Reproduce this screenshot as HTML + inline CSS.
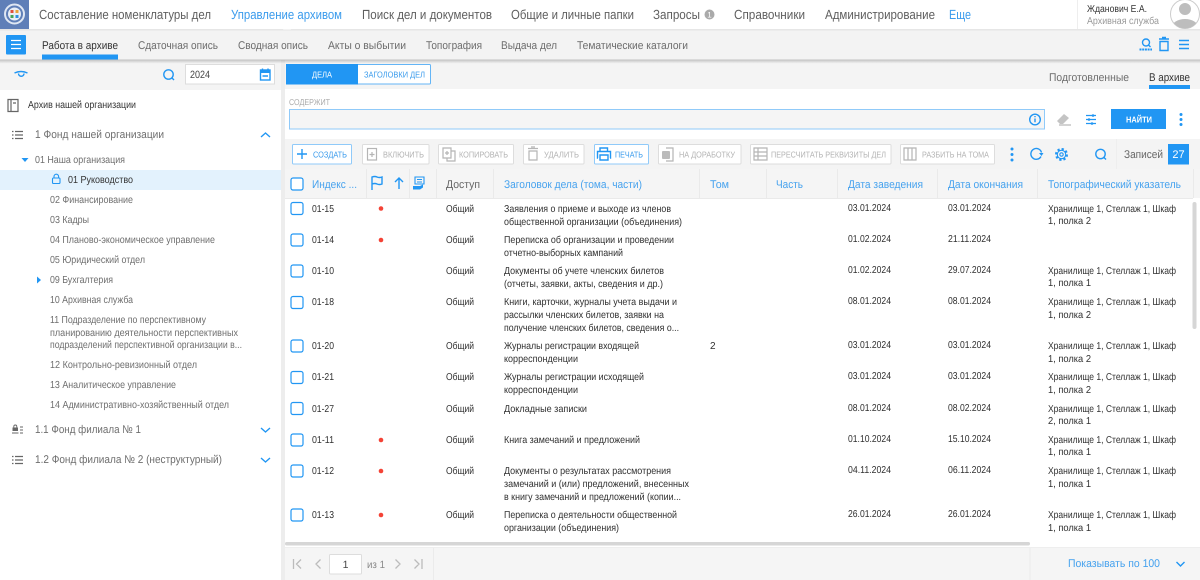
<!DOCTYPE html>
<html lang="ru"><head><meta charset="utf-8"><title>Управление архивом</title>
<style>
html,body{margin:0;padding:0;width:1200px;height:580px;overflow:hidden;background:#fff}
svg{display:block}
text{font-family:"Liberation Sans",sans-serif;white-space:pre}
.nav{font-size:13.2px;fill:#5f5f5f}
.tab{font-size:11.2px;fill:#6c6c6c}
.tree{font-size:10.2px;fill:#6e6e6e}
.fund{font-size:11.2px;fill:#6e6e6e}
.btn{font-size:8.6px;fill:#b3b3b3}
.btna{font-size:8.6px;fill:#3a9bec}
.th{font-size:11.2px;fill:#46a2ee}
.td{font-size:10px;fill:#2f2f2f}
.i{fill:none;stroke:#2196f3;stroke-width:1.4}
.g{fill:none;stroke:#b5b5b5;stroke-width:1.2}
.k{fill:none;stroke:#666;stroke-width:1.2}
</style></head><body>
<svg width="1200" height="580" viewBox="0 0 1200 580" xmlns="http://www.w3.org/2000/svg" text-rendering="geometricPrecision">
<defs>
<linearGradient id="sh" x1="0" y1="0" x2="0" y2="1"><stop offset="0" stop-color="#000" stop-opacity=".22"/><stop offset="1" stop-color="#000" stop-opacity="0"/></linearGradient>
<clipPath id="av"><circle cx="1185" cy="14" r="14.500"/></clipPath>
</defs>
<rect width="1200" height="580" fill="#fff"/>

<!-- top nav -->
<rect x="0" y="0" width="29" height="29" fill="#5f7fb8"/>
<circle cx="14.5" cy="14" r="9.500" fill="none" stroke="#dfe7f3" stroke-width="2"/>
<circle cx="14.5" cy="14" r="6.500" fill="#e8eef6"/>
<rect x="10.500" y="10" width="3" height="3" fill="#e0503c"/><rect x="15.500" y="10" width="3" height="3" fill="#e9a13a"/><rect x="10.500" y="15" width="3" height="3" fill="#46a35a"/><rect x="15.500" y="15" width="3" height="3" fill="#2f8fe0"/>
<text class="nav" x="39" y="19" textLength="172" lengthAdjust="spacingAndGlyphs">Составление номенклатуры дел</text>
<text class="nav" x="231" y="19" textLength="111" lengthAdjust="spacingAndGlyphs" style="fill:#3a9bec">Управление архивом</text>
<text class="nav" x="362" y="19" textLength="130" lengthAdjust="spacingAndGlyphs">Поиск дел и документов</text>
<text class="nav" x="511" y="19" textLength="123" lengthAdjust="spacingAndGlyphs">Общие и личные папки</text>
<text class="nav" x="653" y="19" textLength="47" lengthAdjust="spacingAndGlyphs">Запросы</text>
<circle cx="709.500" cy="14.500" r="5" fill="#aaa"/><text x="709.500" y="17.500" text-anchor="middle" style="font-size:8px;fill:#fff">1</text>
<text class="nav" x="734" y="19" textLength="71" lengthAdjust="spacingAndGlyphs">Справочники</text>
<text class="nav" x="825" y="19" textLength="110" lengthAdjust="spacingAndGlyphs">Администрирование</text>
<text class="nav" x="949" y="19" textLength="22" lengthAdjust="spacingAndGlyphs" style="fill:#3a9bec">Еще</text>
<rect x="1077" y="0" width="1" height="29" fill="#eee"/>
<text x="1087" y="12" textLength="60" lengthAdjust="spacingAndGlyphs" style="font-size:10px;fill:#333">Жданович Е.А.</text>
<text x="1087" y="24" textLength="72" lengthAdjust="spacingAndGlyphs" style="font-size:10px;fill:#999">Архивная служба</text>
<circle cx="1185" cy="14" r="14.500" fill="#fff" stroke="#ccc"/><g clip-path="url(#av)"><circle cx="1185" cy="9" r="6" fill="#bdbdbd"/><ellipse cx="1185" cy="27" rx="13" ry="8" fill="#bdbdbd"/></g>

<!-- subnav -->
<rect x="0" y="29" width="1200" height="31" fill="#f3f3f3"/>
<rect x="0" y="29" width="1200" height="1.500" fill="#e6e6e6"/>
<path d="M283 29.500l4-4 4 4z" fill="#fff"/>
<rect x="6" y="35" width="20" height="19.500" rx="1" fill="#2196f3"/>
<path d="M11 40.500h10M11 44.500h10M11 48.500h10" stroke="#fff" stroke-width="1.300"/>
<text class="tab" x="42" y="49" textLength="76" lengthAdjust="spacingAndGlyphs" style="fill:#333">Работа в архиве</text>
<rect x="42" y="54.500" width="76" height="5" fill="#2196f3"/>
<text class="tab" x="138" y="49" textLength="80" lengthAdjust="spacingAndGlyphs">Сдаточная опись</text>
<text class="tab" x="238" y="49" textLength="70" lengthAdjust="spacingAndGlyphs">Сводная опись</text>
<text class="tab" x="328" y="49" textLength="78" lengthAdjust="spacingAndGlyphs">Акты о выбытии</text>
<text class="tab" x="426" y="49" textLength="56" lengthAdjust="spacingAndGlyphs">Топография</text>
<text class="tab" x="501" y="49" textLength="56" lengthAdjust="spacingAndGlyphs">Выдача дел</text>
<text class="tab" x="577" y="49" textLength="111" lengthAdjust="spacingAndGlyphs">Тематические каталоги</text>
<circle cx="1146" cy="42.500" r="3.500" class="i"/><path d="M1148.500 45l2 2" class="i"/><path d="M1139.500 49.500h12.500" stroke="#2196f3" stroke-width="2" stroke-dasharray="2 .7"/>
<path d="M1160 41.500h8v9h-8zM1159 39h10M1162 37.500h4" class="i"/>
<path d="M1179 40.500h10M1179 44.500h10M1179 48.500h10" class="i"/>

<!-- band under subnav -->
<rect x="0" y="60" width="1200" height="30" fill="#f4f4f4"/>
<rect x="281" y="60" width="4" height="520" fill="#ededed"/>
<!-- left -->
<path d="M14.500 73q6.500-3 13 0" class="i"/><path d="M18.500 73.500a2.700 2.700 0 0 0 5.500 0" fill="none" stroke="#2196f3" stroke-width="1.400"/>
<circle cx="168.500" cy="74.500" r="4.700" class="i"/><path d="M172 78l2 2" class="i"/>
<rect x="185.500" y="64.500" width="89" height="19.500" fill="#fff" stroke="#ddd"/>
<text x="190" y="78" textLength="20" lengthAdjust="spacingAndGlyphs" style="font-size:10.500px;fill:#444">2024</text>
<rect x="260.500" y="70" width="9.500" height="10" class="i"/><rect x="260" y="70" width="10.500" height="3" fill="#2196f3"/><path d="M262.500 68.500v2M268 68.500v2M262.500 76h5.500" class="i"/>

<path d="M8 99.500h10v12h-10zM11 99.500v12M13 103h3" class="k"/>
<text x="28" y="108" textLength="108" lengthAdjust="spacingAndGlyphs" style="font-size:10.200px;fill:#333">Архив нашей организации</text>
<path d="M12 131.500h1.500M12 135h1.500M12 138.500h1.500M15 131.500h8M15 135h8M15 138.500h8" class="k"/>
<text class="fund" x="35" y="138" textLength="129" lengthAdjust="spacingAndGlyphs">1 Фонд нашей организации</text>
<path d="M261 137l4.500-4 4.500 4" class="i"/>
<path d="M21.500 158h7l-3.500 4z" fill="#2196f3"/>
<text class="tree" x="35" y="163" textLength="90" lengthAdjust="spacingAndGlyphs">01 Наша организация</text>
<rect x="0" y="170" width="281" height="20" fill="#e3f2fd"/>
<rect x="52.500" y="178" width="7.500" height="5.500" rx="1" class="i" style="stroke-width:1.100"/><path d="M54 178v-1.500a2.300 2.300 0 0 1 4.600 0v1.500" class="i" style="stroke-width:1.100"/>
<text class="tree" x="68" y="183" textLength="65" lengthAdjust="spacingAndGlyphs" style="fill:#333">01 Руководство</text>
<text class="tree" x="50" y="203" textLength="83" lengthAdjust="spacingAndGlyphs">02 Финансирование</text>
<text class="tree" x="50" y="223" textLength="39" lengthAdjust="spacingAndGlyphs">03 Кадры</text>
<text class="tree" x="50" y="243" textLength="165" lengthAdjust="spacingAndGlyphs">04 Планово-экономическое управление</text>
<text class="tree" x="50" y="263" textLength="95" lengthAdjust="spacingAndGlyphs">05 Юридический отдел</text>
<path d="M37 276.500l4 3.500-4 3.500z" fill="#2196f3"/>
<text class="tree" x="50" y="283" textLength="63" lengthAdjust="spacingAndGlyphs">09 Бухгалтерия</text>
<text class="tree" x="50" y="303" textLength="83" lengthAdjust="spacingAndGlyphs">10 Архивная служба</text>
<text class="tree" x="50" y="323" textLength="156" lengthAdjust="spacingAndGlyphs">11 Подразделение по перспективному</text>
<text class="tree" x="50" y="336" textLength="188" lengthAdjust="spacingAndGlyphs">планированию деятельности перспективных</text>
<text class="tree" x="50" y="348" textLength="192" lengthAdjust="spacingAndGlyphs">подразделений перспективной организации в...</text>
<text class="tree" x="50" y="368" textLength="147" lengthAdjust="spacingAndGlyphs">12 Контрольно-ревизионный отдел</text>
<text class="tree" x="50" y="388" textLength="126" lengthAdjust="spacingAndGlyphs">13 Аналитическое управление</text>
<text class="tree" x="50" y="408" textLength="179" lengthAdjust="spacingAndGlyphs">14 Административно-хозяйственный отдел</text>
<rect x="12.500" y="427.500" width="5.500" height="3.500" fill="#666"/><path d="M13.800 427.500v-1a1.500 1.500 0 0 1 3 0v1" class="k" style="stroke-width:.9"/><path d="M12 433h6.500M20 427h3M20 430h3M20 433h3" class="k" style="stroke-width:1"/>
<text class="fund" x="35" y="433" textLength="106" lengthAdjust="spacingAndGlyphs">1.1 Фонд филиала № 1</text>
<path d="M261 428l4.500 4 4.500-4" class="i"/>
<path d="M12 456.500h1.500M12 460h1.500M12 463.500h1.500M15 456.500h8M15 460h8M15 463.500h8" class="k"/>
<text class="fund" x="35" y="463" textLength="187" lengthAdjust="spacingAndGlyphs">1.2 Фонд филиала № 2 (неструктурный)</text>
<path d="M261 458l4.500 4 4.500-4" class="i"/>

<!-- right top -->
<rect x="286.500" y="64.500" width="144" height="19.500" rx="1" fill="#fff" stroke="#64b5f6"/>
<rect x="286" y="64" width="72" height="20.500" fill="#2196f3"/>
<text x="312" y="77.500" textLength="20" lengthAdjust="spacingAndGlyphs" style="font-size:8.600px;fill:#fff">ДЕЛА</text>
<text class="btna" x="364" y="77.500" textLength="61" lengthAdjust="spacingAndGlyphs">ЗАГОЛОВКИ ДЕЛ</text>
<text class="tab" x="1049" y="81" textLength="80" lengthAdjust="spacingAndGlyphs">Подготовленные</text>
<text class="tab" x="1149" y="81" textLength="41" lengthAdjust="spacingAndGlyphs" style="fill:#333">В архиве</text>
<rect x="1149" y="85" width="41" height="4.500" fill="#2196f3"/>
<rect x="285" y="89" width="915" height="50" fill="#fff"/>
<text x="289" y="105" textLength="41" lengthAdjust="spacingAndGlyphs" style="font-size:8.500px;fill:#aaa">СОДЕРЖИТ</text>
<rect x="289.500" y="109.500" width="755" height="19.500" fill="#f5f5f5" stroke="#90caf9"/>
<circle cx="1035" cy="119.500" r="5.300" class="i"/><path d="M1035 118.500v3.800M1035 116v1.200" class="i"/>
<path d="M1057 121l7-7 5 4-6 6h-3z" fill="#c4c4c4"/><path d="M1059 125h12" class="g"/>
<path d="M1086 115.500h10M1086 119.500h10M1086 123.500h10" class="i" style="stroke-width:1.200"/><circle cx="1093" cy="115.500" r="1.300" fill="#2196f3"/><circle cx="1089" cy="119.500" r="1.300" fill="#2196f3"/><circle cx="1092" cy="123.500" r="1.300" fill="#2196f3"/>
<rect x="1111" y="109" width="55" height="20" fill="#2196f3"/>
<text x="1126" y="122.500" textLength="26" lengthAdjust="spacingAndGlyphs" style="font-size:8.500px;fill:#fff;font-weight:bold">НАЙТИ</text>
<circle cx="1181" cy="114.500" r="1.500" fill="#2196f3"/><circle cx="1181" cy="119.500" r="1.500" fill="#2196f3"/><circle cx="1181" cy="124.500" r="1.500" fill="#2196f3"/>

<!-- toolbar -->
<rect x="285" y="139" width="915" height="30" fill="#f4f4f4"/>
<rect x="292.500" y="144.500" width="59" height="19.500" rx="1" fill="#fff" stroke="#90caf9"/>
<path d="M297 154h10M302 149v10" class="i"/>
<text class="btna" x="313" y="157.500" textLength="34" lengthAdjust="spacingAndGlyphs">СОЗДАТЬ</text>
<rect x="362.500" y="144.500" width="66.500" height="19.500" rx="1" fill="#fff" stroke="#ddd"/>
<rect x="367.500" y="148.500" width="9" height="11.500" class="g"/><path d="M369.500 154.500h5M372 152v5" class="g"/>
<text class="btn" x="383" y="157.500" textLength="41" lengthAdjust="spacingAndGlyphs">ВКЛЮЧИТЬ</text>
<rect x="438.500" y="144.500" width="75" height="19.500" rx="1" fill="#fff" stroke="#ddd"/>
<path d="M443 148h8v10h-8zM451 151h4v10h-8v-3" class="g"/><path d="M445 153h4M447 151v4" class="g"/>
<text class="btn" x="459" y="157.500" textLength="49" lengthAdjust="spacingAndGlyphs">КОПИРОВАТЬ</text>
<rect x="523.500" y="144.500" width="60.500" height="19.500" rx="1" fill="#fff" stroke="#ddd"/>
<path d="M529 151h8v9h-8zM528 148.500h10M531 147h4" class="g"/>
<text class="btn" x="544" y="157.500" textLength="35" lengthAdjust="spacingAndGlyphs">УДАЛИТЬ</text>
<rect x="594.500" y="144.500" width="54" height="19.500" rx="1" fill="#fff" stroke="#90caf9"/>
<path d="M600 151v-3h7.500v3M598 158h-.5v-6.500h13v6.500h-.5M600 155h8v5h-8z" class="i"/>
<text class="btna" x="615" y="157.500" textLength="28" lengthAdjust="spacingAndGlyphs">ПЕЧАТЬ</text>
<rect x="658.500" y="144.500" width="82.500" height="19.500" rx="1" fill="#fff" stroke="#ddd"/>
<path d="M666 148h7v13h-7" class="g"/><rect x="662" y="151" width="8" height="8" rx="1" fill="#bbb"/>
<text class="btn" x="679" y="157.500" textLength="56" lengthAdjust="spacingAndGlyphs">НА ДОРАБОТКУ</text>
<rect x="750.500" y="144.500" width="140.500" height="19.500" rx="1" fill="#fff" stroke="#ddd"/>
<path d="M754 148h13v12h-13zM754 152h13M754 156h13M758 148v12" class="g"/>
<text class="btn" x="771" y="157.500" textLength="115" lengthAdjust="spacingAndGlyphs">ПЕРЕСЧИТАТЬ РЕКВИЗИТЫ ДЕЛ</text>
<rect x="900.500" y="144.500" width="94" height="19.500" rx="1" fill="#fff" stroke="#ddd"/>
<path d="M904 148h12v12h-12zM908 148v12M912 148v12" class="g"/>
<text class="btn" x="922" y="157.500" textLength="67" lengthAdjust="spacingAndGlyphs">РАЗБИТЬ НА ТОМА</text>
<circle cx="1012" cy="149" r="1.500" fill="#2196f3"/><circle cx="1012" cy="154.500" r="1.500" fill="#2196f3"/><circle cx="1012" cy="160" r="1.500" fill="#2196f3"/>
<path d="M1041 156.500a5.400 5.400 0 1 1 .5-4" class="i"/><path d="M1039 153h4.500l-2 3z" fill="#2196f3"/>
<circle cx="1061.500" cy="154.500" r="5.300" fill="none" stroke="#2196f3" stroke-width="2.400" stroke-dasharray="2.200 1.950"/>
<circle cx="1061.500" cy="154.500" r="4.200" class="i" style="stroke-width:1.100"/><circle cx="1061.500" cy="154.500" r="1.700" class="i" style="stroke-width:1.100"/>
<circle cx="1100.500" cy="154" r="4.700" class="i"/><path d="M1104 157.500l2 2" class="i"/>
<rect x="1116" y="139" width="1" height="30" fill="#eee"/>
<text x="1124" y="158" textLength="39" lengthAdjust="spacingAndGlyphs" style="font-size:11.200px;fill:#666">Записей</text>
<rect x="1168" y="144" width="21" height="20.500" fill="#2196f3"/>
<text x="1178.500" y="158" text-anchor="middle" style="font-size:11px;fill:#fff">27</text>

<!-- table header -->
<rect x="285" y="169" width="915" height="29" fill="#f5f5f5"/>
<rect x="285" y="198" width="908" height="1" fill="#eaeaea"/>
<path d="M366.500 169v29M409.500 169v29M436.500 169v29M493.500 169v29M699.500 169v29M766.500 169v29M837.500 169v29M937.500 169v29M1037.500 169v29M1193.500 169v29" stroke="#eaeaea"/>
<rect x="291" y="178" width="12" height="12" rx="2" fill="#fff" stroke="#2196f3" stroke-width="1.200"/>
<text class="th" x="312" y="188" textLength="45" lengthAdjust="spacingAndGlyphs">Индекс ...</text>
<path d="M372 190v-13q3-1 5 0t5 0v7q-3 1-5 0t-5 0" class="i"/>
<path d="M399 189v-11M395 182l4-4 4 4" class="i"/>
<path d="M415 177h9v7h-9zM417 179.500h5M417 182h5" class="i" style="stroke-width:1.100"/><path d="M413 186h7l3-1.500v3l-3 2h-7z" fill="#2196f3"/>
<text class="th" x="446" y="188" textLength="34" lengthAdjust="spacingAndGlyphs" style="fill:#666">Доступ</text>
<text class="th" x="504" y="188" textLength="138" lengthAdjust="spacingAndGlyphs">Заголовок дела (тома, части)</text>
<text class="th" x="710" y="188" textLength="19" lengthAdjust="spacingAndGlyphs">Том</text>
<text class="th" x="776" y="188" textLength="27" lengthAdjust="spacingAndGlyphs">Часть</text>
<text class="th" x="848" y="188" textLength="75" lengthAdjust="spacingAndGlyphs">Дата заведения</text>
<text class="th" x="948" y="188" textLength="75" lengthAdjust="spacingAndGlyphs">Дата окончания</text>
<text class="th" x="1048" y="188" textLength="133" lengthAdjust="spacingAndGlyphs">Топографический указатель</text>

<!-- rows -->
<g fill="#fff" stroke="#2196f3" stroke-width="1.200">
<rect x="291" y="202.500" width="12" height="12" rx="2"/><rect x="291" y="234" width="12" height="12" rx="2"/><rect x="291" y="265" width="12" height="12" rx="2"/><rect x="291" y="296.500" width="12" height="12" rx="2"/><rect x="291" y="340" width="12" height="12" rx="2"/><rect x="291" y="371.500" width="12" height="12" rx="2"/><rect x="291" y="402.500" width="12" height="12" rx="2"/><rect x="291" y="434" width="12" height="12" rx="2"/><rect x="291" y="465" width="12" height="12" rx="2"/><rect x="291" y="509" width="12" height="12" rx="2"/>
</g>
<g fill="#f44336"><circle cx="381" cy="208.500" r="2.300"/><circle cx="381" cy="240" r="2.300"/><circle cx="381" cy="440" r="2.300"/><circle cx="381" cy="471" r="2.300"/><circle cx="381" cy="515" r="2.300"/></g>

<text class="td" x="312" y="212" textLength="22" lengthAdjust="spacingAndGlyphs">01-15</text>
<text class="td" x="446" y="212" textLength="28" lengthAdjust="spacingAndGlyphs">Общий</text>
<text class="td" x="504" y="212" textLength="167" lengthAdjust="spacingAndGlyphs">Заявления о приеме и выходе из членов</text>
<text class="td" x="504" y="225" textLength="178" lengthAdjust="spacingAndGlyphs">общественной организации (объединения)</text>
<text class="td" x="848" y="211" textLength="43" lengthAdjust="spacingAndGlyphs">03.01.2024</text>
<text class="td" x="948" y="211" textLength="43" lengthAdjust="spacingAndGlyphs">03.01.2024</text>
<text class="td" x="1048" y="212" textLength="128" lengthAdjust="spacingAndGlyphs">Хранилище 1, Стеллаж 1, Шкаф</text>
<text class="td" x="1048" y="224" textLength="43" lengthAdjust="spacingAndGlyphs">1, полка 2</text>

<text class="td" x="312" y="243" textLength="22" lengthAdjust="spacingAndGlyphs">01-14</text>
<text class="td" x="446" y="243" textLength="28" lengthAdjust="spacingAndGlyphs">Общий</text>
<text class="td" x="504" y="243" textLength="170" lengthAdjust="spacingAndGlyphs">Переписка об организации и проведении</text>
<text class="td" x="504" y="256" textLength="119" lengthAdjust="spacingAndGlyphs">отчетно-выборных кампаний</text>
<text class="td" x="848" y="242" textLength="43" lengthAdjust="spacingAndGlyphs">01.02.2024</text>
<text class="td" x="948" y="242" textLength="43" lengthAdjust="spacingAndGlyphs">21.11.2024</text>

<text class="td" x="312" y="274" textLength="22" lengthAdjust="spacingAndGlyphs">01-10</text>
<text class="td" x="446" y="274" textLength="28" lengthAdjust="spacingAndGlyphs">Общий</text>
<text class="td" x="504" y="274" textLength="160" lengthAdjust="spacingAndGlyphs">Документы об учете членских билетов</text>
<text class="td" x="504" y="287" textLength="159" lengthAdjust="spacingAndGlyphs">(отчеты, заявки, акты, сведения и др.)</text>
<text class="td" x="848" y="273" textLength="43" lengthAdjust="spacingAndGlyphs">01.02.2024</text>
<text class="td" x="948" y="273" textLength="43" lengthAdjust="spacingAndGlyphs">29.07.2024</text>
<text class="td" x="1048" y="274" textLength="128" lengthAdjust="spacingAndGlyphs">Хранилище 1, Стеллаж 1, Шкаф</text>
<text class="td" x="1048" y="286" textLength="43" lengthAdjust="spacingAndGlyphs">1, полка 1</text>

<text class="td" x="312" y="305" textLength="22" lengthAdjust="spacingAndGlyphs">01-18</text>
<text class="td" x="446" y="305" textLength="28" lengthAdjust="spacingAndGlyphs">Общий</text>
<text class="td" x="504" y="305" textLength="173" lengthAdjust="spacingAndGlyphs">Книги, карточки, журналы учета выдачи и</text>
<text class="td" x="504" y="318" textLength="160" lengthAdjust="spacingAndGlyphs">рассылки членских билетов, заявки на</text>
<text class="td" x="504" y="331" textLength="175" lengthAdjust="spacingAndGlyphs">получение членских билетов, сведения о...</text>
<text class="td" x="848" y="304" textLength="43" lengthAdjust="spacingAndGlyphs">08.01.2024</text>
<text class="td" x="948" y="304" textLength="43" lengthAdjust="spacingAndGlyphs">08.01.2024</text>
<text class="td" x="1048" y="305" textLength="128" lengthAdjust="spacingAndGlyphs">Хранилище 1, Стеллаж 1, Шкаф</text>
<text class="td" x="1048" y="318" textLength="43" lengthAdjust="spacingAndGlyphs">1, полка 2</text>

<text class="td" x="312" y="349" textLength="22" lengthAdjust="spacingAndGlyphs">01-20</text>
<text class="td" x="446" y="349" textLength="28" lengthAdjust="spacingAndGlyphs">Общий</text>
<text class="td" x="504" y="349" textLength="135" lengthAdjust="spacingAndGlyphs">Журналы регистрации входящей</text>
<text class="td" x="504" y="362" textLength="74" lengthAdjust="spacingAndGlyphs">корреспонденции</text>
<text class="td" x="710" y="349">2</text>
<text class="td" x="848" y="348" textLength="43" lengthAdjust="spacingAndGlyphs">03.01.2024</text>
<text class="td" x="948" y="348" textLength="43" lengthAdjust="spacingAndGlyphs">03.01.2024</text>
<text class="td" x="1048" y="349" textLength="128" lengthAdjust="spacingAndGlyphs">Хранилище 1, Стеллаж 1, Шкаф</text>
<text class="td" x="1048" y="362" textLength="43" lengthAdjust="spacingAndGlyphs">1, полка 2</text>

<text class="td" x="312" y="380" textLength="22" lengthAdjust="spacingAndGlyphs">01-21</text>
<text class="td" x="446" y="380" textLength="28" lengthAdjust="spacingAndGlyphs">Общий</text>
<text class="td" x="504" y="380" textLength="140" lengthAdjust="spacingAndGlyphs">Журналы регистрации исходящей</text>
<text class="td" x="504" y="393" textLength="74" lengthAdjust="spacingAndGlyphs">корреспонденции</text>
<text class="td" x="848" y="379" textLength="43" lengthAdjust="spacingAndGlyphs">03.01.2024</text>
<text class="td" x="948" y="379" textLength="43" lengthAdjust="spacingAndGlyphs">03.01.2024</text>
<text class="td" x="1048" y="380" textLength="128" lengthAdjust="spacingAndGlyphs">Хранилище 1, Стеллаж 1, Шкаф</text>
<text class="td" x="1048" y="393" textLength="43" lengthAdjust="spacingAndGlyphs">1, полка 2</text>

<text class="td" x="312" y="412" textLength="22" lengthAdjust="spacingAndGlyphs">01-27</text>
<text class="td" x="446" y="412" textLength="28" lengthAdjust="spacingAndGlyphs">Общий</text>
<text class="td" x="504" y="412" textLength="83" lengthAdjust="spacingAndGlyphs">Докладные записки</text>
<text class="td" x="848" y="411" textLength="43" lengthAdjust="spacingAndGlyphs">08.01.2024</text>
<text class="td" x="948" y="411" textLength="43" lengthAdjust="spacingAndGlyphs">08.02.2024</text>
<text class="td" x="1048" y="412" textLength="128" lengthAdjust="spacingAndGlyphs">Хранилище 1, Стеллаж 1, Шкаф</text>
<text class="td" x="1048" y="424" textLength="43" lengthAdjust="spacingAndGlyphs">2, полка 1</text>

<text class="td" x="312" y="443" textLength="22" lengthAdjust="spacingAndGlyphs">01-11</text>
<text class="td" x="446" y="443" textLength="28" lengthAdjust="spacingAndGlyphs">Общий</text>
<text class="td" x="504" y="443" textLength="136" lengthAdjust="spacingAndGlyphs">Книга замечаний и предложений</text>
<text class="td" x="848" y="442" textLength="43" lengthAdjust="spacingAndGlyphs">01.10.2024</text>
<text class="td" x="948" y="442" textLength="43" lengthAdjust="spacingAndGlyphs">15.10.2024</text>
<text class="td" x="1048" y="443" textLength="128" lengthAdjust="spacingAndGlyphs">Хранилище 1, Стеллаж 1, Шкаф</text>
<text class="td" x="1048" y="455" textLength="43" lengthAdjust="spacingAndGlyphs">1, полка 1</text>

<text class="td" x="312" y="474" textLength="22" lengthAdjust="spacingAndGlyphs">01-12</text>
<text class="td" x="446" y="474" textLength="28" lengthAdjust="spacingAndGlyphs">Общий</text>
<text class="td" x="504" y="474" textLength="167" lengthAdjust="spacingAndGlyphs">Документы о результатах рассмотрения</text>
<text class="td" x="504" y="487" textLength="185" lengthAdjust="spacingAndGlyphs">замечаний и (или) предложений, внесенных</text>
<text class="td" x="504" y="500" textLength="177" lengthAdjust="spacingAndGlyphs">в книгу замечаний и предложений (копии...</text>
<text class="td" x="848" y="473" textLength="43" lengthAdjust="spacingAndGlyphs">04.11.2024</text>
<text class="td" x="948" y="473" textLength="43" lengthAdjust="spacingAndGlyphs">06.11.2024</text>
<text class="td" x="1048" y="474" textLength="128" lengthAdjust="spacingAndGlyphs">Хранилище 1, Стеллаж 1, Шкаф</text>
<text class="td" x="1048" y="487" textLength="43" lengthAdjust="spacingAndGlyphs">1, полка 1</text>

<text class="td" x="312" y="518" textLength="22" lengthAdjust="spacingAndGlyphs">01-13</text>
<text class="td" x="446" y="518" textLength="28" lengthAdjust="spacingAndGlyphs">Общий</text>
<text class="td" x="504" y="518" textLength="173" lengthAdjust="spacingAndGlyphs">Переписка о деятельности общественной</text>
<text class="td" x="504" y="531" textLength="115" lengthAdjust="spacingAndGlyphs">организации (объединения)</text>
<text class="td" x="848" y="517" textLength="43" lengthAdjust="spacingAndGlyphs">26.01.2024</text>
<text class="td" x="948" y="517" textLength="43" lengthAdjust="spacingAndGlyphs">26.01.2024</text>
<text class="td" x="1048" y="518" textLength="128" lengthAdjust="spacingAndGlyphs">Хранилище 1, Стеллаж 1, Шкаф</text>
<text class="td" x="1048" y="531" textLength="43" lengthAdjust="spacingAndGlyphs">1, полка 1</text>

<!-- scrollbars -->
<rect x="1192.500" y="202" width="4" height="127" rx="2" fill="#d6d6d6"/>
<rect x="285" y="542" width="745" height="3.500" rx="1.700" fill="#d6d6d6"/>

<!-- footer -->
<rect x="285" y="547" width="915" height="33" fill="#f5f5f5"/>
<rect x="285" y="547" width="915" height="1" fill="#eee"/>
<path d="M293.500 559v10M301 559.500l-4.500 4.500 4.500 4.500M320.500 559.500l-4.500 4.500 4.500 4.500M395.500 559.500l4.500 4.500-4.500 4.500M414.500 559.500l4.500 4.500-4.500 4.500M422 559v10" fill="none" stroke="#bbb" stroke-width="1.300"/>
<rect x="329.500" y="554.500" width="32" height="19.500" rx="1" fill="#fff" stroke="#ddd"/>
<text x="345.500" y="568" text-anchor="middle" style="font-size:10.500px;fill:#444">1</text>
<text x="367" y="568" textLength="18" lengthAdjust="spacingAndGlyphs" style="font-size:10.500px;fill:#888">из 1</text>
<rect x="433" y="548" width="1" height="32" fill="#ebebeb"/>
<rect x="1029.500" y="548" width="1" height="32" fill="#ebebeb"/>
<text x="1068" y="567" textLength="92" lengthAdjust="spacingAndGlyphs" style="font-size:11.200px;fill:#46a2ee">Показывать по 100</text>
<path d="M1176.500 562l4 4 4-4" class="i"/>

<!-- shadow -->
<rect x="0" y="59.500" width="1200" height="4" fill="url(#sh)"/>
</svg>
</body></html>
